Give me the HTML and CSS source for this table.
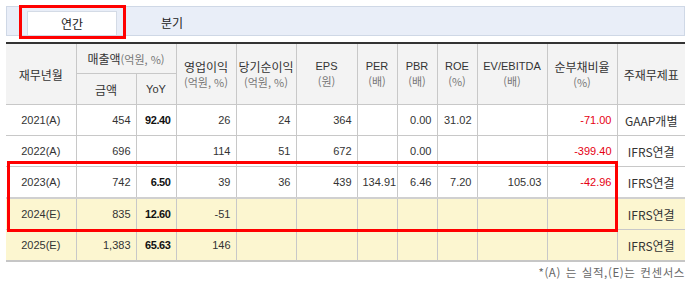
FILE: index.html
```html
<!DOCTYPE html>
<html lang="ko">
<head>
<meta charset="utf-8">
<link rel="stylesheet" href="styles.css">
</head>
<body>
<div class="wrap">
  <div class="tabbar">
    <div class="tab active">연간</div>
    <div class="tab">분기</div>
  </div>
  <table class="fin">
    <colgroup>
      <col style="width:70px"><col style="width:60px"><col style="width:40px"><col style="width:60px"><col style="width:60px"><col style="width:61px"><col style="width:40px"><col style="width:40px"><col style="width:40px"><col style="width:70px"><col style="width:70px"><col style="width:68px">
    </colgroup>
    <thead>
      <tr class="h1">
        <th rowspan="2">재무년월</th>
        <th colspan="2">매출액<span class="u">(억원, %)</span></th>
        <th rowspan="2">영업이익<br><span class="u">(억원, %)</span></th>
        <th rowspan="2">당기순이익<br><span class="u">(억원, %)</span></th>
        <th rowspan="2" class="en">EPS<br><span class="u">(원)</span></th>
        <th rowspan="2" class="en">PER<br><span class="u">(배)</span></th>
        <th rowspan="2" class="en">PBR<br><span class="u">(배)</span></th>
        <th rowspan="2" class="en">ROE<br><span class="u">(%)</span></th>
        <th rowspan="2" class="en">EV/EBITDA<br><span class="u">(배)</span></th>
        <th rowspan="2">순부채비율<br><span class="u">(%)</span></th>
        <th rowspan="2">주재무제표</th>
      </tr>
      <tr class="h2">
        <th>금액</th>
        <th class="en">YoY</th>
      </tr>
    </thead>
    <tbody>
      <tr>
        <td class="yr">2021(A)</td><td>454</td><td class="b">92.40</td><td>26</td><td>24</td><td>364</td><td></td><td>0.00</td><td>31.02</td><td></td><td class="neg">-71.00</td><td class="std">GAAP개별</td>
      </tr>
      <tr>
        <td class="yr">2022(A)</td><td>696</td><td class="b"></td><td>114</td><td>51</td><td>672</td><td></td><td>0.00</td><td></td><td></td><td class="neg">-399.40</td><td class="std">IFRS연결</td>
      </tr>
      <tr>
        <td class="yr">2023(A)</td><td>742</td><td class="b">6.50</td><td>39</td><td>36</td><td>439</td><td>134.91</td><td>6.46</td><td>7.20</td><td>105.03</td><td class="neg">-42.96</td><td class="std">IFRS연결</td>
      </tr>
      <tr class="est first">
        <td class="yr">2024(E)</td><td>835</td><td class="b">12.60</td><td>-51</td><td></td><td></td><td></td><td></td><td></td><td></td><td></td><td class="std">IFRS연결</td>
      </tr>
      <tr class="est">
        <td class="yr">2025(E)</td><td>1,383</td><td class="b">65.63</td><td>146</td><td></td><td></td><td></td><td></td><td></td><td></td><td></td><td class="std">IFRS연결</td>
      </tr>
    </tbody>
  </table>
  <p class="note">*(A) 는 실적,(E)는 컨센서스</p>
  <div class="mark mark-tab"></div>
  <div class="mark mark-rows"></div>
</div>
</body>
</html>
```
FILE: styles.css
```css
html, body {
  margin: 0;
  padding: 0;
  background: #fff;
}
body {
  font-family: "Liberation Sans", "Noto Sans CJK KR", sans-serif;
  color: #333;
}
.wrap {
  position: relative;
  width: 679px;
  padding: 6px 0 0 6px;
}
.tabbar {
  display: flex;
  gap: 10px;
  height: 24px;
  padding: 4px 0 0 20px;
  background: #e9eef8;
  border: 1px solid #cfd8e6;
  border-bottom: 1px solid #cfd8e6;
}
.tab {
  width: 90px;
  height: 24px;
  line-height: 24px;
  text-align: center;
  font-family: "Noto Sans CJK KR", sans-serif;
  font-size: 12px;
  color: #222;
  box-sizing: border-box;
}
.tab.active {
  background: #fff;
  border: 1px solid #d4dbe6;
  border-bottom: none;
}
.fin {
  margin-top: 6px;
  width: 679px;
  border-collapse: collapse;
  table-layout: fixed;
  border-top: 2px solid #333;
  border-bottom: 2px solid #c6c6c6;
}
.fin th, .fin td {
  border: 1px solid #c8c8c8;
  padding: 0 5px;
  white-space: nowrap;
  overflow: hidden;
}
.fin th:first-child, .fin td:first-child {
  border-left: none;
}
.fin th:last-child, .fin td:last-child {
  border-right: none;
}
.fin thead th {
  background: #f3f3f3;
  font-weight: normal;
  font-family: "Noto Sans CJK KR", sans-serif;
  font-size: 12px;
  line-height: 15px;
  color: #333;
  padding: 0 1px;
}
.fin thead th.en {
  font-family: "Liberation Sans", "Noto Sans CJK KR", sans-serif;
  font-size: 11px;
}
.fin tr.h1 th { height: 29px; }
.fin tr.h2 th { height: 30px; }
.fin thead .u {
  font-size: 11px;
  color: #777;
  font-family: "Noto Sans CJK KR", sans-serif;
}
.fin tbody td {
  height: 30px;
  text-align: right;
  font-size: 11px;
  color: #333;
}
.fin tbody td.yr {
  text-align: center;
}
.fin tbody td.b {
  font-weight: bold;
  color: #111;
  letter-spacing: -0.4px;
}
.fin tbody td.neg {
  color: #e60012;
}
.fin tbody td.std {
  text-align: center;
  font-family: "Noto Sans CJK KR", sans-serif;
  font-size: 12px;
  color: #333;
}
.fin tr.est td {
  background: #fcf6d0;
}
.fin tr.first td {
  border-top: 2px solid #d0d0d0;
}
.note {
  margin: 3px 0 0;
  text-align: right;
  font-family: "Noto Sans CJK KR", sans-serif;
  font-size: 11.5px;
  letter-spacing: 0.6px;
  word-spacing: 1px;
  color: #666;
  line-height: 14px;
}
.mark {
  position: absolute;
  border: 3px solid #f00;
  box-sizing: border-box;
}
.mark-tab {
  left: 19px;
  top: 5px;
  width: 107px;
  height: 34px;
}
.mark-rows {
  left: 7px;
  top: 161px;
  width: 611px;
  height: 71px;
}
```
